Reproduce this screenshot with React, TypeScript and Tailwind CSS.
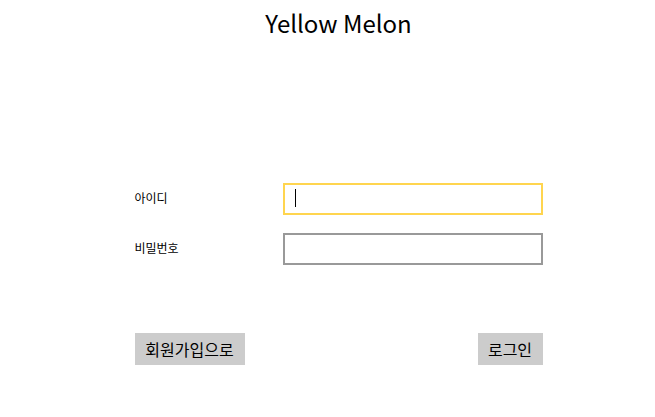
import React from "react";

const font = { fontFamily: '"Noto Sans CJK KR", "Noto Sans", sans-serif' };

export default function App() {
  return (
    <div className="w-[655px] h-[417px] bg-white pl-[22px] text-black" style={font}>
      <h1 className="pt-[6px] text-center text-[24px] leading-[34px] font-normal">Yellow Melon</h1>

      <div className="w-[408px] mx-auto mt-[143px]">
        <div className="flex items-center justify-between h-[32px]">
          <label className="text-[12px] -mt-[2px]">아이디</label>
          <div className="relative">
            <input className="w-[260px] h-[32px] border-2 border-[#ffd54f] outline-none px-[10px] caret-transparent" />
            <span className="absolute left-[12px] top-[6px] w-px h-[18px] bg-black" />
          </div>
        </div>
        <div className="flex items-center justify-between h-[32px] mt-[18px]">
          <label className="text-[12px] -mt-[2px]">비밀번호</label>
          <input type="password" className="w-[260px] h-[32px] border-2 border-[#999999] outline-none px-[10px]" />
        </div>

        <div className="flex justify-between mt-[68px]">
          <button className="w-[110px] h-[32px] bg-[#cccccc] text-[16px]">회원가입으로</button>
          <button className="w-[65px] h-[32px] bg-[#cccccc] text-[16px]">로그인</button>
        </div>
      </div>
    </div>
  );
}
